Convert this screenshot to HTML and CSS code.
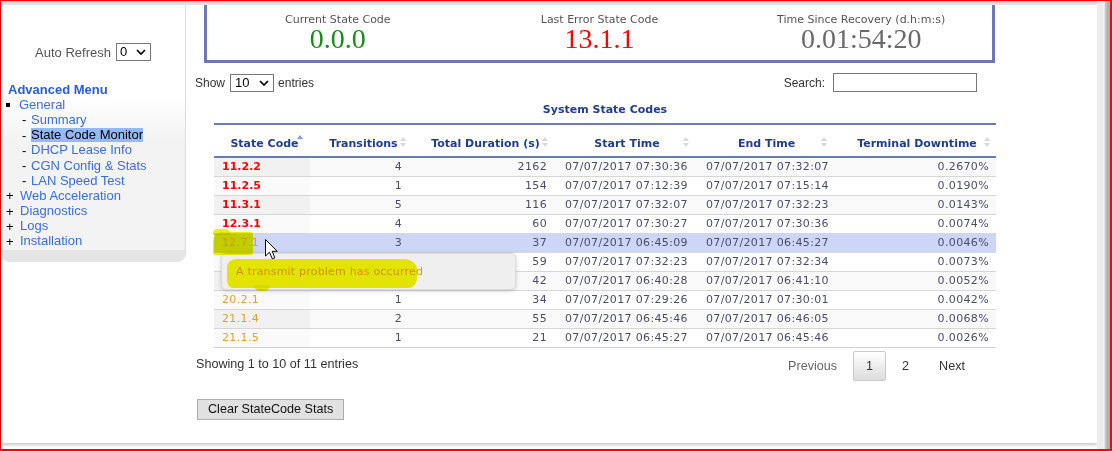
FILE: index.html
```html
<!DOCTYPE html>
<html lang="en">
<head>
<meta charset="utf-8">
<title>State Code Monitor</title>
<link rel="stylesheet" href="styles.css">
</head>
<body>
<div class="frame">
  <div class="page">
    <aside class="sidebar">
      <div class="refresh">
        <span>Auto Refresh</span>
        <span class="select sel-small">0<svg width="10" height="6" viewBox="0 0 10 6"><path d="M1 1l4 4 4-4" fill="none" stroke="#000" stroke-width="1.7"/></svg></span>
      </div>
      <div class="menu-title">Advanced Menu</div>
      <ul class="menu">
        <li><span class="mark"><span class="sq"></span></span><a>General</a></li>
        <li class="sub"><span class="dash">-</span><a>Summary</a></li>
        <li class="sub"><span class="dash">-</span><a class="active">State Code Monitor</a></li>
        <li class="sub"><span class="dash">-</span><a>DHCP Lease Info</a></li>
        <li class="sub"><span class="dash">-</span><a>CGN Config &amp; Stats</a></li>
        <li class="sub"><span class="dash">-</span><a>LAN Speed Test</a></li>
        <li><span class="mark plus">+</span><a>Web Acceleration</a></li>
        <li><span class="mark plus">+</span><a>Diagnostics</a></li>
        <li><span class="mark plus">+</span><a>Logs</a></li>
        <li><span class="mark plus">+</span><a>Installation</a></li>
      </ul>
      <div class="side-foot"></div>
    </aside>

    <main class="main">
      <div class="stats">
        <div class="stat">
          <div class="stat-label">Current State Code</div>
          <div class="stat-value green">0.0.0</div>
        </div>
        <div class="stat">
          <div class="stat-label">Last Error State Code</div>
          <div class="stat-value red">13.1.1</div>
        </div>
        <div class="stat">
          <div class="stat-label">Time Since Recovery (d.h:m:s)</div>
          <div class="stat-value grey">0.01:54:20</div>
        </div>
      </div>

      <div class="dt">
        <div class="dt-top">
          <div class="dt-length">Show <span class="select sel-show">10<svg width="10" height="6" viewBox="0 0 10 6"><path d="M1 1l4 4 4-4" fill="none" stroke="#000" stroke-width="1.7"/></svg></span> entries</div>
          <div class="dt-filter">Search: <span class="search"></span></div>
        </div>

        <table class="codes">
          <caption>System State Codes</caption>
          <colgroup>
            <col class="c1"><col class="c2"><col class="c3"><col class="c4"><col class="c5"><col class="c6">
          </colgroup>
          <thead>
            <tr>
              <th>State Code<span class="sort asc"><i class="up"></i></span></th>
              <th>Transitions<span class="sort"><i class="up"></i><i class="down"></i></span></th>
              <th>Total Duration (s)<span class="sort"><i class="up"></i><i class="down"></i></span></th>
              <th>Start Time<span class="sort"><i class="up"></i><i class="down"></i></span></th>
              <th>End Time<span class="sort"><i class="up"></i><i class="down"></i></span></th>
              <th>Terminal Downtime<span class="sort"><i class="up"></i><i class="down"></i></span></th>
            </tr>
          </thead>
          <tbody>
            <tr class="odd"><td class="code err">11.2.2</td><td class="num tr">4</td><td class="num">2162</td><td class="time">07/07/2017 07:30:36</td><td class="time">07/07/2017 07:32:07</td><td class="num">0.2670%</td></tr>
            <tr class="even"><td class="code err">11.2.5</td><td class="num tr">1</td><td class="num">154</td><td class="time">07/07/2017 07:12:39</td><td class="time">07/07/2017 07:15:14</td><td class="num">0.0190%</td></tr>
            <tr class="odd"><td class="code err">11.3.1</td><td class="num tr">5</td><td class="num">116</td><td class="time">07/07/2017 07:32:07</td><td class="time">07/07/2017 07:32:23</td><td class="num">0.0143%</td></tr>
            <tr class="even"><td class="code err">12.3.1</td><td class="num tr">4</td><td class="num">60</td><td class="time">07/07/2017 07:30:27</td><td class="time">07/07/2017 07:30:36</td><td class="num">0.0074%</td></tr>
            <tr class="odd hover"><td class="code warn">12.7.1</td><td class="num tr">3</td><td class="num">37</td><td class="time">07/07/2017 06:45:09</td><td class="time">07/07/2017 06:45:27</td><td class="num">0.0046%</td></tr>
            <tr class="even"><td class="code warn"></td><td class="num tr"></td><td class="num">59</td><td class="time">07/07/2017 07:32:23</td><td class="time">07/07/2017 07:32:34</td><td class="num">0.0073%</td></tr>
            <tr class="odd"><td class="code warn"></td><td class="num tr"></td><td class="num">42</td><td class="time">07/07/2017 06:40:28</td><td class="time">07/07/2017 06:41:10</td><td class="num">0.0052%</td></tr>
            <tr class="even"><td class="code warn">20.2.1</td><td class="num tr">1</td><td class="num">34</td><td class="time">07/07/2017 07:29:26</td><td class="time">07/07/2017 07:30:01</td><td class="num">0.0042%</td></tr>
            <tr class="odd"><td class="code warn">21.1.4</td><td class="num tr">2</td><td class="num">55</td><td class="time">07/07/2017 06:45:46</td><td class="time">07/07/2017 06:46:05</td><td class="num">0.0068%</td></tr>
            <tr class="even"><td class="code warn">21.1.5</td><td class="num tr">1</td><td class="num">21</td><td class="time">07/07/2017 06:45:27</td><td class="time">07/07/2017 06:45:46</td><td class="num">0.0026%</td></tr>
          </tbody>
        </table>

        <div class="dt-bottom">
          <div class="dt-info">Showing 1 to 10 of 11 entries</div>
          <div class="dt-paginate">
            <span class="pg disabled">Previous</span>
            <span class="pg current">1</span>
            <span class="pg">2</span>
            <span class="pg">Next</span>
          </div>
        </div>
      </div>

      <button class="btn" type="button">Clear StateCode Stats</button>

      <div class="tooltip">A transmit problem has occurred</div>
      <div class="marker mk-code"></div>
      <div class="marker mk-code2"></div>
      <div class="marker mk-tip"></div>
      <div class="marker mk-tip2"></div>
      <svg class="cursor" width="13" height="21" viewBox="0 0 13 21"><path d="M0.5 0.5 L0.5 17 L4.5 13.2 L7.3 19.8 L9.8 18.8 L7.2 12.3 L12.3 12.3 Z" fill="#fff" stroke="#000" stroke-width="1" stroke-linejoin="miter"/></svg>
    </main>
  </div>
  <div class="rail"></div>
</div>
</body>
</html>
```

FILE: styles.css
```css
* { box-sizing: border-box; }

html, body {
  margin: 0;
  padding: 0;
  background: #fff;
}

body {
  width: 1112px;
  height: 451px;
  overflow: hidden;
  font-family: "Liberation Sans", Arial, sans-serif;
  color: #333;
}

.frame {
  display: flex;
  width: 1112px;
  height: 451px;
  border-style: solid;
  border-color: #ff0000;
  border-width: 1px 2px 2px 1px;
  background: linear-gradient(to bottom, #c6c6c6 0, #ececec 4px, #fff 4px);
}

.page {
  flex: 1;
  display: flex;
  margin-top: 4px;
  height: 438px;
  background: #fff;
  box-shadow: 0 2px 3px rgba(0, 0, 0, 0.22);
}

.rail {
  width: 13px;
  flex: none;
  background: linear-gradient(to right, #ececec 0, #ececec 6px, #f7f7f7 7px, #cfcfcf 8px, #b5b5b5 10px, #a9a9a9 13px);
}

/* ---------- Sidebar ---------- */
.sidebar {
  width: 185px;
  flex: none;
  height: 257px;
  display: flex;
  flex-direction: column;
  padding-top: 38px;
  border-right: 1px solid #dedede;
  border-radius: 0 0 9px 9px;
  background: linear-gradient(to bottom, #fff 0, #fff 92px, #f3f3f3 135px, #f3f3f3 100%);
  overflow: hidden;
  font-size: 13px;
}

.refresh {
  display: flex;
  justify-content: center;
  align-items: center;
  gap: 5px;
  height: 18px;
  color: #555;
}

.select {
  display: inline-flex;
  align-items: center;
  justify-content: space-between;
  height: 18px;
  border: 1px solid #767676;
  background: #fff;
  color: #000;
  font-size: 13px;
  padding: 0 4px 0 3px;
  line-height: 16px;
}

.sel-small { width: 35px; }
.sel-show { width: 44px; padding-left: 4px; }

.menu-title {
  margin-top: 21px;
  padding-left: 7px;
  font-weight: bold;
  line-height: 15.2px;
  color: #2a5cd6;
}

.menu {
  list-style: none;
  margin: 0;
  padding: 0;
}

.menu li {
  display: flex;
  align-items: center;
  height: 15.2px;
  padding-left: 4px;
  white-space: nowrap;
}

.menu li.sub {
  padding-left: 20px;
}

.menu a {
  color: #3b6de0;
  line-height: 14px;
}

.menu a.active {
  color: #000;
  background: #93b9f6;
}

.mark {
  display: inline-flex;
  align-items: center;
  width: 14px;
  color: #000;
}

.mark.plus {
  width: 15px;
  font-size: 13px;
  padding-left: 1px;
}

.sq {
  display: block;
  width: 4px;
  height: 4px;
  margin-left: 1px;
  background: #000;
}

.dash {
  width: 10px;
  color: #000;
  padding-left: 1px;
}

.side-foot {
  margin-top: auto;
  height: 12px;
  background: #e6e5e5;
}

/* ---------- Main ---------- */
.main {
  position: relative;
  flex: 1;
  min-width: 0;
}

.stats {
  display: flex;
  margin-left: 18px;
  width: 791px;
  height: 58px;
  border: 3px solid #6b7ab4;
  border-top: 0;
  padding-top: 8px;
}

.stat {
  flex: 1;
  text-align: center;
}

.stat-label {
  font-family: "DejaVu Sans", Verdana, sans-serif;
  font-size: 11px;
  line-height: 13px;
  color: #555;
}

.stat-value {
  margin-top: 1px;
  font-family: "Liberation Serif", "Times New Roman", serif;
  font-size: 28px;
  line-height: 24px;
}

.green { color: #1e8a1e; }
.red { color: #ff0000; }
.grey { color: #6a6a6a; }

.dt {
  margin-left: 9px;
  width: 784px;
}

.dt-top {
  display: flex;
  justify-content: space-between;
  align-items: center;
  margin-top: 10px;
  height: 19px;
  font-size: 12px;
  color: #333;
}

.dt-length {
  display: flex;
  align-items: center;
}

.dt-length .select {
  margin: 0 4px 0 5px;
}

.dt-filter {
  display: flex;
  align-items: center;
  margin-right: 2px;
}

.search {
  display: inline-block;
  width: 144px;
  height: 19px;
  margin-left: 8px;
  border: 1px solid #767676;
  background: #fff;
}

/* ---------- Table ---------- */
.codes {
  margin-top: 11px;
  margin-left: 19px;
  width: 782px;
  table-layout: fixed;
  border-collapse: separate;
  border-spacing: 0;
  font-family: "DejaVu Sans", Verdana, sans-serif;
  font-size: 11px;
}

.codes caption {
  font-weight: bold;
  line-height: 13px;
  padding-bottom: 7px;
  color: #1f3c8f;
}

col.c1 { width: 96px; }
col.c2 { width: 102px; }
col.c3 { width: 142px; }
col.c4 { width: 141px; }
col.c5 { width: 138px; }
col.c6 { width: 163px; }

.codes th {
  position: relative;
  padding: 12px 11px 6px 16px;
  line-height: 13px;
  text-align: center;
  font-weight: bold;
  color: #1f3c8f;
  white-space: nowrap;
  border-top: 2px solid #6b7ab4;
  border-bottom: 2px solid #6b7ab4;
}

.sort {
  position: absolute;
  right: 6px;
  top: 12px;
  display: flex;
  flex-direction: column;
  gap: 2px;
}

.sort i {
  display: block;
  width: 0;
  height: 0;
  border-left: 3.5px solid transparent;
  border-right: 3.5px solid transparent;
}

.sort i.up { border-bottom: 4px solid #d8d8d8; }
.sort i.down { border-top: 4px solid #d8d8d8; }

.sort.asc { top: 10px; right: 7px; }
.sort.asc i.up { border-bottom-color: #8d9bd8; }

.codes td {
  height: 18px;
  padding: 2px 10px;
  line-height: 14px;
  color: #4c4c6a;
  letter-spacing: 0.35px;
  white-space: nowrap;
  border-top: 1px solid #d6d6d6;
}

.codes tbody tr:first-child td { border-top: 0; }
.codes tbody tr:last-child td { border-bottom: 1px solid #d0d0d0; }

.codes tr.odd td { background: #f9f9f9; }
.codes tr.even td { background: #fff; }
.codes tr.odd td.code { background: #f1f1f1; }
.codes tr.even td.code { background: #fafafa; }
.codes tr.hover td,
.codes tr.hover td.code { background: #cdd6f6; }

.codes td.code { padding-left: 8px; }
.codes td.err { color: #ff0000; font-weight: bold; letter-spacing: 0; }
.codes td.warn { color: #e0a12e; }

.codes td.num { text-align: right; padding-right: 7px; }
.codes td.num.tr { padding-right: 10px; }
.codes td.time { padding-left: 11px; padding-right: 0; }

/* ---------- Bottom ---------- */
.dt-bottom {
  display: flex;
  justify-content: space-between;
  align-items: flex-start;
  font-size: 12.6px;
  color: #333;
}

.dt-info {
  padding-top: 8px;
  line-height: 16px;
  padding-left: 1px;
}

.dt-paginate {
  display: flex;
  padding-top: 3px;
}

.pg {
  margin-left: 2px;
  padding: 6px 13px;
  line-height: 16px;
  border: 1px solid transparent;
  border-radius: 2px;
  color: #333;
}

.pg.disabled { color: #666; margin-right: 0; }

.pg.current {
  padding: 6px 12px;
  border-color: #cacaca;
  background: linear-gradient(to bottom, #fff 0%, #dcdcdc 100%);
}

.btn {
  display: block;
  margin: 18px 0 0 11px;
  height: 21px;
  padding: 0 10px;
  font-family: "Liberation Sans", Arial, sans-serif;
  font-size: 12.6px;
  line-height: 19px;
  color: #111;
  background: #e1e1e1;
  border: 1px solid #adadad;
  border-radius: 0;
}

/* ---------- Overlays ---------- */
.tooltip {
  position: absolute;
  left: 35px;
  top: 248px;
  width: 295px;
  height: 37px;
  padding: 11px 0 0 14px;
  font-family: "DejaVu Sans", Verdana, sans-serif;
  font-size: 11px;
  line-height: 14px;
  letter-spacing: 0.2px;
  color: #d99a10;
  background: #efefef;
  border: 1px solid #dcdcdc;
  border-radius: 5px;
  box-shadow: 0 1px 4px rgba(0, 0, 0, 0.18);
}

.marker {
  position: absolute;
  background: #f3f300;
  mix-blend-mode: multiply;
}

.mk-code {
  left: 27px;
  top: 227px;
  width: 40px;
  height: 23px;
  border-radius: 9px 3px 3px 2px;
}

.mk-code2 {
  left: 27px;
  top: 224px;
  width: 18px;
  height: 6px;
  border-radius: 6px 8px 0 0;
}

.mk-tip {
  left: 41px;
  top: 254px;
  width: 190px;
  height: 29px;
  border-radius: 10px 14px 8px 6px / 8px 10px 10px 8px;
}

.mk-tip2 {
  left: 68px;
  top: 280px;
  width: 16px;
  height: 6px;
  border-radius: 0 0 6px 6px;
}

.cursor {
  position: absolute;
  left: 79px;
  top: 234px;
}
```
